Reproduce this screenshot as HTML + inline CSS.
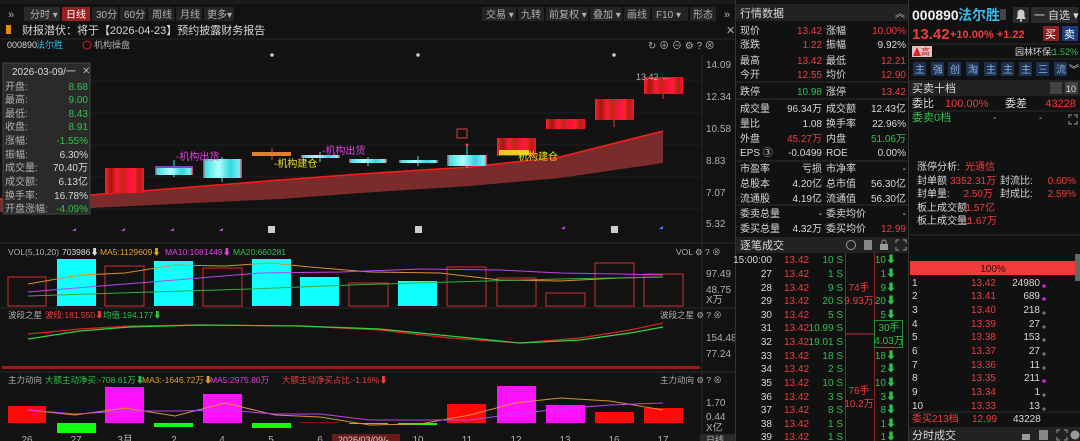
<!DOCTYPE html>
<html><head><meta charset="utf-8"><style>
html,body{margin:0;padding:0;background:#111112;width:1080px;height:441px;overflow:hidden}
svg{display:block}
text{font-family:"Liberation Sans","Noto Sans CJK SC",sans-serif;font-size:10px}
.w{fill:#d8d8d8}.g{fill:#b0b0b0}.r{fill:#f03c3c}.gr{fill:#2fc24a}.c{fill:#2cc6e8}.m{fill:#e040e0}.o{fill:#e0a030}.y{fill:#e8e020}
.e{text-anchor:end}.mid{text-anchor:middle}
.lg{font-size:8.5px}
</style></head><body>
<svg width="1080" height="441" viewBox="0 0 1080 441" xmlns="http://www.w3.org/2000/svg">
<defs>
<linearGradient id="rc" x1="0" x2="1"><stop offset="0" stop-color="#ff2030"/><stop offset=".15" stop-color="#a01808"/><stop offset=".3" stop-color="#ff1838"/><stop offset=".45" stop-color="#c02810"/><stop offset=".6" stop-color="#ff1040"/><stop offset=".75" stop-color="#ff2030"/><stop offset=".88" stop-color="#b02010"/><stop offset="1" stop-color="#ff1030"/></linearGradient>
<linearGradient id="cc" x1="0" x2="1"><stop offset="0" stop-color="#e02040"/><stop offset=".06" stop-color="#40e0e0"/><stop offset=".4" stop-color="#b0ffff"/><stop offset=".7" stop-color="#30d8e0"/><stop offset=".93" stop-color="#80f0f0"/><stop offset="1" stop-color="#e02040"/></linearGradient>
</defs>
<rect x="0" y="0" width="735" height="441" fill="#121213"/>
<rect x="0" y="0" width="735" height="4" fill="#1a1a1a"/>
<text x="8" y="18" class="g" style="font-size:11px">»</text>
<rect x="24" y="7" width="36" height="14" fill="#2a2a2a"/><text x="30" y="18" class="g">分时 ▾</text>
<rect x="62" y="7" width="28" height="14" fill="#9a2020"/><text x="66" y="18" fill="#fff">日线</text>
<rect x="92" y="7" width="26" height="14" fill="#242424"/><text x="96" y="18" class="g">30分</text>
<rect x="120" y="7" width="26" height="14" fill="#242424"/><text x="124" y="18" class="g">60分</text>
<rect x="148" y="7" width="26" height="14" fill="#242424"/><text x="152" y="18" class="g">周线</text>
<rect x="176" y="7" width="26" height="14" fill="#242424"/><text x="180" y="18" class="g">月线</text>
<rect x="204" y="7" width="30" height="14" fill="#242424"/><text x="207" y="18" class="g">更多▾</text>
<rect x="482" y="7" width="34" height="14" fill="#242424"/><text x="486" y="18" class="g">交易 ▾</text>
<rect x="518" y="7" width="26" height="14" fill="#242424"/><text x="521" y="18" class="g">九转</text>
<rect x="546" y="7" width="42" height="14" fill="#242424"/><text x="549" y="18" class="g">前复权 ▾</text>
<rect x="590" y="7" width="32" height="14" fill="#242424"/><text x="593" y="18" class="g">叠加 ▾</text>
<rect x="624" y="7" width="26" height="14" fill="#242424"/><text x="627" y="18" class="g">画线</text>
<rect x="652" y="7" width="36" height="14" fill="#242424"/><text x="656" y="18" class="g">F10 ▾</text>
<rect x="690" y="7" width="26" height="14" fill="#242424"/><text x="693" y="18" class="g">形态</text>
<text x="724" y="18" class="g" style="font-size:11px">»</text>
<rect x="6" y="25" width="5" height="9" fill="#e08a10"/>
<text x="22" y="34" class="w" style="font-size:11px">财报潜伏：将于【2026-04-23】预约披露财务报告</text>
<text x="726" y="34" class="g" style="font-size:11px">✕</text>
<line x1="0" y1="39" x2="735" y2="39" stroke="#262626"/>
<text x="7" y="48" class="w" style="font-size:9px">000890</text><text x="36" y="48" class="c" style="font-size:9px">法尔胜</text>
<circle cx="87" cy="45" r="4" fill="none" stroke="#d02020"/><text x="94" y="48" class="g" style="font-size:9px">机构操盘</text>
<text x="648" y="49" class="g" style="font-size:10px">↻ ⊕ ⊖ ⚙ ? ⊗</text>
<circle cx="272" cy="55" r="1.8" fill="#ccc"/><circle cx="418" cy="55" r="1.8" fill="#ccc"/><circle cx="614" cy="55" r="1.8" fill="#ccc"/>
<line x1="0" y1="81" x2="700" y2="81" stroke="#1e1e1e"/><line x1="0" y1="113" x2="700" y2="113" stroke="#1e1e1e"/><line x1="0" y1="145" x2="700" y2="145" stroke="#1e1e1e"/><line x1="0" y1="177" x2="700" y2="177" stroke="#1e1e1e"/><line x1="0" y1="209" x2="700" y2="209" stroke="#1e1e1e"/>
<line x1="702" y1="55" x2="702" y2="441" stroke="#2a2a2a"/>
<g class="g" style="font-size:9px"><text x="706" y="68">14.09</text><text x="706" y="100">12.34</text><text x="706" y="132">10.58</text><text x="706" y="164">8.83</text><text x="706" y="196">7.07</text><text x="706" y="227">5.32</text></g>
<polygon points="0,199 90,195 280,180 360,174 470,167 560,157 663,131 663,163 560,178 470,186 360,193 280,199 90,208 0,212" fill="#7a2c2c"/>
<polyline points="0,199 90,195 280,180 360,174 470,167 560,157 663,131" fill="none" stroke="#ff1a1a" stroke-width="1.5"/>
<rect x="105" y="168" width="39" height="25" fill="url(#rc)"/>
<line x1="174" y1="160" x2="174" y2="177" stroke="#40e0e0"/><rect x="155" y="166" width="38" height="9" fill="url(#cc)"/><rect x="155" y="166" width="38" height="2" fill="#8040e0"/>
<line x1="222" y1="157" x2="222" y2="182" stroke="#40e0e0"/><rect x="203" y="159" width="39" height="19" fill="url(#cc)"/>
<line x1="272" y1="148" x2="272" y2="160" stroke="#e04040"/><rect x="252" y="152" width="39" height="4" fill="#e08030"/>
<line x1="320" y1="152" x2="320" y2="162" stroke="#40e0e0"/><rect x="301" y="155" width="39" height="3" fill="url(#cc)"/>
<line x1="368" y1="157" x2="368" y2="166" stroke="#40e0e0"/><rect x="349" y="159" width="38" height="4" fill="url(#cc)"/>
<line x1="418" y1="156" x2="418" y2="166" stroke="#40e0e0"/><rect x="399" y="160" width="39" height="3" fill="url(#cc)"/>
<line x1="467" y1="146" x2="467" y2="168" stroke="#40e0e0"/><rect x="447" y="155" width="40" height="11" fill="url(#cc)"/>
<rect x="457" y="129" width="10" height="9" fill="none" stroke="#d04040"/><circle cx="467" cy="145" r="1.5" fill="#f04040"/>
<rect x="497" y="138" width="39" height="18" fill="url(#rc)"/><rect x="499" y="150" width="30" height="5" fill="#e8d020"/>
<rect x="546" y="119" width="39" height="10" fill="url(#rc)"/>
<line x1="614" y1="118" x2="614" y2="127" stroke="#f03030"/><rect x="595" y="99" width="39" height="21" fill="url(#rc)"/>
<line x1="663" y1="92" x2="663" y2="99" stroke="#f03030"/><rect x="644" y="77" width="39" height="17" fill="url(#rc)"/>
<text x="636" y="80" class="g" style="font-size:9px">13.42 ←</text>
<g style="font-size:9px"><text x="176" y="160" class="m">-机构出货</text><text x="274" y="167" class="y">-机构建仓</text><text x="322" y="154" class="m">-机构出货</text><text x="518" y="160" class="y">机构建仓</text></g>
<g fill="#c040e0"><polygon points="76,228 72,231 76,231"/><polygon points="125,228 121,231 125,231"/><polygon points="174,228 170,231 174,231"/><polygon points="223,228 219,231 223,231"/><polygon points="565,226 561,229 565,229"/></g>
<g fill="#4080f0"><polygon points="614,226 610,229 614,229"/><polygon points="663,226 659,229 663,229"/></g>
<rect x="268" y="226" width="7" height="7" fill="#ccc"/><rect x="415" y="226" width="7" height="7" fill="#ccc"/><rect x="611" y="226" width="7" height="7" fill="#ccc"/>
<rect x="3" y="63" width="87" height="151" fill="#2a2a2b" stroke="#444"/>
<text x="12" y="75" class="w">2026-03-09/一</text><text x="82" y="74" class="g">✕</text>
<g class="g"><text x="5" y="90">开盘:</text><text x="5" y="103">最高:</text><text x="5" y="117">最低:</text><text x="5" y="130">收盘:</text><text x="5" y="144">涨幅:</text><text x="5" y="158">振幅:</text><text x="5" y="171">成交量:</text><text x="5" y="185">成交额:</text><text x="5" y="199">换手率:</text><text x="5" y="212">开盘涨幅:</text></g>
<g class="e"><text x="88" y="90" class="gr">8.68</text><text x="88" y="103" class="gr">9.00</text><text x="88" y="117" class="gr">8.43</text><text x="88" y="130" class="gr">8.91</text><text x="88" y="144" class="gr">-1.55%</text><text x="88" y="158" class="w">6.30%</text><text x="88" y="171" class="w">70.40万</text><text x="88" y="185" class="w">6.13亿</text><text x="88" y="199" class="w">16.78%</text><text x="88" y="212" class="gr">-4.09%</text></g>
<line x1="0" y1="243" x2="735" y2="243" stroke="#2a2a2a"/>
<text x="8" y="255" class="g lg">VOL(5,10,20)</text><text x="62" y="255" class="w lg">703986⬇</text><text x="100" y="255" class="o lg">MA5:1129609⬇</text><text x="165" y="255" class="m lg">MA10:1081449⬇</text><text x="233" y="255" class="gr lg">MA20:660281</text>
<text x="676" y="255" class="g lg">VOL ⚙ ? ⊗</text>
<g fill="none" stroke="#d03030"><rect x="8" y="277" width="38" height="29"/><rect x="105" y="266" width="39" height="40"/><rect x="203" y="268" width="39" height="38"/><rect x="349" y="283" width="39" height="23"/><rect x="447" y="267" width="39" height="39"/><rect x="497" y="278" width="39" height="28"/><rect x="546" y="293" width="39" height="13"/><rect x="595" y="263" width="39" height="43"/><rect x="644" y="274" width="39" height="32"/></g>
<g fill="#10ffff"><rect x="57" y="259" width="39" height="47"/><rect x="154" y="261" width="39" height="45"/><rect x="252" y="259" width="39" height="47"/><rect x="300" y="277" width="39" height="29"/><rect x="398" y="281" width="39" height="25"/></g>
<polyline points="28,284 80,275 125,273 175,265 225,266 270,263 310,267 370,272 440,273 500,280 560,281 620,278 663,277" fill="none" stroke="#d89030"/>
<polyline points="28,292 100,286 175,280 260,273 340,272 420,269 500,270 560,273 620,274 663,275" fill="none" stroke="#c040f0"/>
<polyline points="28,296 120,293 250,289 350,285 450,282 560,279 663,277" fill="none" stroke="#30b040"/>
<g class="g" style="font-size:9px"><text x="706" y="277">97.49</text><text x="706" y="293">48.75</text><text x="706" y="303">X万</text></g>
<line x1="0" y1="308" x2="735" y2="308" stroke="#2a2a2a"/>
<text x="8" y="318" class="g lg">波段之星</text><text x="45" y="318" class="r lg">波段:181.550⬇</text><text x="103" y="318" class="gr lg">均值:194.177⬇</text>
<text x="660" y="318" class="g lg">波段之星 ⚙ ? ⊗</text>
<polyline points="28,334 80,329 130,326 200,325 300,326 380,330 450,338 520,343 580,338 630,330 663,323" fill="none" stroke="#e02020" stroke-width="1.2"/>
<polyline points="28,339 80,331 130,327 200,325 300,326 380,329 450,336 520,343 580,340 630,333 663,327" fill="none" stroke="#30d040" stroke-width="1.2"/>
<g class="g" style="font-size:9px"><text x="706" y="341">154.48</text><text x="706" y="357">77.24</text></g>
<rect x="2" y="366" width="698" height="3" fill="#a01818"/>
<line x1="0" y1="372" x2="735" y2="372" stroke="#2a2a2a"/>
<text x="8" y="383" class="g lg">主力动向</text><text x="45" y="383" class="gr lg">大额主动净买:-708.61万⬇</text><text x="142" y="383" class="o lg">MA3:-1646.72万⬇</text><text x="210" y="383" class="m lg">MA5:2975.80万</text><text x="282" y="383" class="r lg">大额主动净买占比:-1.16%⬇</text>
<text x="660" y="383" class="g lg">主力动向 ⚙ ? ⊗</text>
<g fill="#ff0a0a"><rect x="8" y="406" width="38" height="17"/><rect x="447" y="404" width="39" height="19"/><rect x="595" y="412" width="39" height="11"/><rect x="644" y="408" width="39" height="15"/></g>
<g fill="#ff10ff"><rect x="105" y="387" width="39" height="36"/><rect x="203" y="394" width="39" height="29"/><rect x="497" y="386" width="39" height="37"/><rect x="546" y="405" width="39" height="18"/></g>
<g fill="#10ff10"><rect x="57" y="423" width="39" height="10"/><rect x="154" y="423" width="39" height="4"/><rect x="252" y="423" width="39" height="5"/><rect x="349" y="423" width="39" height="1"/><rect x="398" y="423" width="39" height="2"/></g>
<rect x="300" y="422" width="39" height="1" fill="#801010"/>
<polyline points="28,410 75,415 125,408 175,416 225,403 275,415 320,417 370,425 420,424 470,415 515,403 560,398 610,401 663,410" fill="none" stroke="#d89030"/>
<polyline points="28,410 75,414 125,411 175,411 225,410 275,414 320,414 370,420 420,420 470,420 515,414 560,409 610,405 663,403" fill="none" stroke="#c040f0"/>
<g class="g" style="font-size:9px"><text x="706" y="406">1.70</text><text x="706" y="420">0.44</text><text x="706" y="431">X亿</text></g>
<g class="g mid" style="font-size:9px"><text x="27" y="443">26</text><text x="76" y="443">27</text><text x="125" y="443">3月</text><text x="174" y="443">2</text><text x="222" y="443">4</text><text x="271" y="443">5</text><text x="320" y="443">6</text><text x="418" y="443">10</text><text x="467" y="443">11</text><text x="516" y="443">12</text><text x="565" y="443">13</text><text x="614" y="443">16</text><text x="663" y="443">17</text></g>
<rect x="332" y="434" width="68" height="7" fill="#6a1a1a"/><text x="338" y="443" class="w" style="font-size:9px">2026/03/09/-</text>
<rect x="700" y="434" width="35" height="7" fill="#2a2a2a"/><text x="706" y="443" class="g" style="font-size:9px">日线</text>

<rect x="735" y="0" width="173" height="441" fill="#111112"/>
<line x1="735.5" y1="0" x2="735.5" y2="441" stroke="#333"/>
<rect x="736" y="4" width="172" height="17" fill="#222"/>
<text x="740" y="17" class="w" style="font-size:11px">行情数据</text><text x="895" y="17" class="g">︽</text>
<g style="font-size:11px">
<g class="w"><text x="740" y="34">现价</text><text x="740" y="48">涨跌</text><text x="740" y="64">最高</text><text x="740" y="78">今开</text><text x="740" y="95">跌停</text><text x="740" y="112">成交量</text><text x="740" y="127">量比</text><text x="740" y="142">外盘</text><text x="740" y="156">EPS ③</text><text x="740" y="172">市盈率</text><text x="740" y="187">总股本</text><text x="740" y="202">流通股</text><text x="740" y="217">委卖总量</text><text x="740" y="232">委买总量</text>
<text x="826" y="34">涨幅</text><text x="826" y="48">振幅</text><text x="826" y="64">最低</text><text x="826" y="78">均价</text><text x="826" y="95">涨停</text><text x="826" y="112">成交额</text><text x="826" y="127">换手率</text><text x="826" y="142">内盘</text><text x="826" y="156">ROE</text><text x="826" y="172">市净率</text><text x="826" y="187">总市值</text><text x="826" y="202">流通值</text><text x="826" y="217">委卖均价</text><text x="826" y="232">委买均价</text></g>
<g class="e"><text x="822" y="34" class="r">13.42</text><text x="822" y="48" class="r">1.22</text><text x="822" y="64" class="r">13.42</text><text x="822" y="78" class="r">12.55</text><text x="822" y="95" class="gr">10.98</text><text x="822" y="112" class="w">96.34万</text><text x="822" y="127" class="w">1.08</text><text x="822" y="142" class="r">45.27万</text><text x="822" y="156" class="w">-0.0499</text><text x="822" y="172" class="w">亏损</text><text x="822" y="187" class="w">4.20亿</text><text x="822" y="202" class="w">4.19亿</text><text x="822" y="217" class="w">-</text><text x="822" y="232" class="w">4.32万</text>
<text x="906" y="34" class="r">10.00%</text><text x="906" y="48" class="w">9.92%</text><text x="906" y="64" class="r">12.21</text><text x="906" y="78" class="r">12.90</text><text x="906" y="95" class="r">13.42</text><text x="906" y="112" class="w">12.43亿</text><text x="906" y="127" class="w">22.96%</text><text x="906" y="142" class="gr">51.06万</text><text x="906" y="156" class="w">0.00%</text><text x="906" y="172" class="w">-</text><text x="906" y="187" class="w">56.30亿</text><text x="906" y="202" class="w">56.30亿</text><text x="906" y="217" class="w">-</text><text x="906" y="232" class="r">12.99</text></g>
</g>
<g stroke="#2e2e2e"><line x1="736" y1="82" x2="908" y2="82"/><line x1="736" y1="99" x2="908" y2="99"/><line x1="736" y1="161" x2="908" y2="161"/><line x1="736" y1="205" x2="908" y2="205"/></g>
<rect x="736" y="237" width="172" height="16" fill="#222"/>
<text x="740" y="249" class="w" style="font-size:11px">逐笔成交</text>
<circle cx="851" cy="245" r="4.5" fill="none" stroke="#999"/><rect x="864" y="240" width="8" height="10" fill="#888"/><rect x="880" y="244" width="8" height="6" fill="#999"/><path d="M882 244v-2a2 2 0 0 1 4 0v2" fill="none" stroke="#999"/><path d="M896 243v-3h3M903 240h3v3M906 247v3h-3M899 250h-3v-3" fill="none" stroke="#999"/>
<line x1="845.5" y1="253" x2="845.5" y2="441" stroke="#8a2020"/><line x1="874.5" y1="253" x2="874.5" y2="441" stroke="#8a2020"/>
<line x1="845" y1="334" x2="874" y2="334" stroke="#c03030"/>
<rect x="874.5" y="320.5" width="28" height="27" fill="none" stroke="#209030"/>
<g class="r mid" style="font-size:10px"><text x="859" y="291">74手</text><text x="859" y="304">9.93万</text><text x="859" y="394">76手</text><text x="859" y="407">10.2万</text></g>
<g class="gr mid" style="font-size:10px"><text x="889" y="331">30手</text><text x="889" y="344">4.03万</text></g>
<g style="font-size:10px">
<g class="w e"><text x="772" y="263">15:00:00</text><text x="772" y="277">27</text><text x="772" y="291">28</text><text x="772" y="304">29</text><text x="772" y="318">30</text><text x="772" y="331">31</text><text x="772" y="345">32</text><text x="772" y="359">33</text><text x="772" y="372">34</text><text x="772" y="386">35</text><text x="772" y="400">36</text><text x="772" y="413">37</text><text x="772" y="427">38</text><text x="772" y="440">39</text></g>
<g class="r"><text x="784" y="263">13.42</text><text x="784" y="277">13.42</text><text x="784" y="291">13.42</text><text x="784" y="304">13.42</text><text x="784" y="318">13.42</text><text x="784" y="331">13.42</text><text x="784" y="345">13.42</text><text x="784" y="359">13.42</text><text x="784" y="372">13.42</text><text x="784" y="386">13.42</text><text x="784" y="400">13.42</text><text x="784" y="413">13.42</text><text x="784" y="427">13.42</text><text x="784" y="440">13.42</text></g>
<g class="gr e"><text x="843" y="263">10 S</text><text x="843" y="277">1 S</text><text x="843" y="291">9 S</text><text x="843" y="304">20 S</text><text x="843" y="318">5 S</text><text x="843" y="331">10.99 S</text><text x="843" y="345">19.01 S</text><text x="843" y="359">18 S</text><text x="843" y="372">2 S</text><text x="843" y="386">10 S</text><text x="843" y="400">3 S</text><text x="843" y="413">8 S</text><text x="843" y="427">1 S</text><text x="843" y="440">1 S</text>
<text x="896" y="263">10⬇</text><text x="896" y="277">1⬇</text><text x="896" y="291">9⬇</text><text x="896" y="304">20⬇</text><text x="896" y="318">5⬇</text><text x="896" y="359">18⬇</text><text x="896" y="372">2⬇</text><text x="896" y="386">10⬇</text><text x="896" y="400">3⬇</text><text x="896" y="413">8⬇</text><text x="896" y="427">1⬇</text><text x="896" y="440">1⬇</text></g>
</g>

<rect x="908" y="0" width="172" height="441" fill="#111112"/>
<line x1="908.5" y1="0" x2="908.5" y2="441" stroke="#333"/>
<text x="912" y="20" fill="#f0f0f0" style="font-size:14px;font-weight:bold">000890</text><text x="958" y="20" fill="#38b8e8" style="font-size:14px;font-weight:bold">法尔胜</text>
<rect x="1000" y="9" width="6" height="11" fill="#444"/>
<rect x="1013" y="7" width="16" height="16" fill="#2a2a2a"/><path d="M1016 19h10l-1.5-2v-4a3.5 3.5 0 0 0-7 0v4z" fill="#ccc"/><circle cx="1021" cy="20.5" r="1.2" fill="#ccc"/>
<rect x="1031" y="7" width="47" height="16" fill="#2a2a2a"/><text x="1034" y="19" class="w" style="font-size:11px">一 自选 ▾</text>
<text x="912" y="39" class="r" style="font-size:15px;font-weight:bold">13.42</text><text x="950" y="38" class="r" style="font-size:11px;font-weight:bold">+10.00%  +1.22</text>
<rect x="1043" y="26" width="16" height="15" fill="#8a2020"/><text x="1045" y="38" fill="#fff" style="font-size:11px">买</text>
<rect x="1062" y="26" width="16" height="15" fill="#1d3a80"/><text x="1064" y="38" fill="#fff" style="font-size:11px">卖</text>
<line x1="908" y1="44" x2="1080" y2="44" stroke="#2a2a2a"/>
<rect x="912" y="46" width="20" height="11" fill="#e8c0c0"/><polygon points="913,56 917,47 921,56" fill="#e02020"/><text x="921" y="55" fill="#c02020" style="font-size:9px">高</text>
<text x="1015" y="55" class="w" style="font-size:9px">园林环保:</text><text x="1078" y="55" class="gr e" style="font-size:9px">-1.52%</text>
<line x1="908" y1="59" x2="1080" y2="59" stroke="#2a2a2a"/>
<g fill="#1e3050"><rect x="913" y="62" width="13" height="14"/><rect x="931" y="62" width="13" height="14"/><rect x="948" y="62" width="13" height="14"/><rect x="966" y="62" width="13" height="14"/><rect x="984" y="62" width="13" height="14"/><rect x="1001" y="62" width="13" height="14"/><rect x="1019" y="62" width="13" height="14"/><rect x="1036" y="62" width="13" height="14"/><rect x="1054" y="62" width="13" height="14"/></g>
<g fill="#8fb0d8" style="font-size:9px"><text x="915" y="73">主</text><text x="933" y="73">强</text><text x="950" y="73">创</text><text x="968" y="73">淘</text><text x="986" y="73">主</text><text x="1003" y="73">主</text><text x="1021" y="73">主</text><text x="1038" y="73">三</text><text x="1056" y="73">流</text></g>
<text x="1069" y="73" class="w" style="font-size:10px">︾</text>
<rect x="909" y="80" width="171" height="16" fill="#222"/>
<text x="912" y="92" class="w" style="font-size:11px">买卖十档</text>
<rect x="1050" y="82" width="12" height="12" fill="#444"/><rect x="1065" y="82" width="13" height="12" fill="#444"/><text x="1066" y="92" class="w" style="font-size:9px">10</text>
<text x="912" y="107" class="w" style="font-size:11px">委比</text><text x="945" y="107" class="r" style="font-size:11px">100.00%</text><text x="1005" y="107" class="w" style="font-size:11px">委差</text><text x="1076" y="107" class="r e" style="font-size:11px">43228</text>
<line x1="908" y1="111" x2="1080" y2="111" stroke="#2a2a2a"/>
<text x="912" y="121" class="gr" style="font-size:11px">委卖0档</text><text x="993" y="121" class="g">-</text><text x="1039" y="121" class="g">-</text><path d="M1069 118v-3h3M1074 115h3v3M1077 121v3h-3M1072 124h-3v-3" fill="none" stroke="#999"/>
<g style="font-size:11px"><text x="917" y="170" class="w">涨停分析:</text><text x="965" y="170" class="r">光通信</text>
<text x="917" y="184" class="w">封单额</text><text x="950" y="184" class="r">3352.31万</text><text x="1000" y="184" class="w">封流比:</text><text x="1076" y="184" class="r e">0.60%</text>
<text x="917" y="197" class="w">封单量:</text><text x="993" y="197" class="r e">2.50万</text><text x="1000" y="197" class="w">封成比:</text><text x="1076" y="197" class="r e">2.59%</text>
<text x="917" y="211" class="w">板上成交额:</text><text x="995" y="211" class="r e">1.57亿</text>
<text x="917" y="224" class="w">板上成交量:</text><text x="997" y="224" class="r e">11.67万</text></g>
<line x1="908" y1="235" x2="1080" y2="235" stroke="#2a2a2a"/>
<rect x="910" y="261" width="165" height="14" fill="#f23a3a"/><text x="993" y="272" class="mid" fill="#2a0a0a" style="font-size:10px">100%</text>
<rect x="1075" y="254" width="5" height="27" fill="#666"/>
<g style="font-size:11px">
<g class="w"><text x="912" y="286">1</text><text x="912" y="299">2</text><text x="912" y="313">3</text><text x="912" y="327">4</text><text x="912" y="340">5</text><text x="912" y="354">6</text><text x="912" y="368">7</text><text x="912" y="381">8</text><text x="912" y="395">9</text><text x="912" y="409">10</text></g>
<g class="r e"><text x="996" y="286">13.42</text><text x="996" y="299">13.41</text><text x="996" y="313">13.40</text><text x="996" y="327">13.39</text><text x="996" y="340">13.38</text><text x="996" y="354">13.37</text><text x="996" y="368">13.36</text><text x="996" y="381">13.35</text><text x="996" y="395">13.34</text><text x="996" y="409">13.33</text></g>
<g class="w e"><text x="1040" y="286">24980</text><text x="1040" y="299">689</text><text x="1040" y="313">218</text><text x="1040" y="327">27</text><text x="1040" y="340">153</text><text x="1040" y="354">27</text><text x="1040" y="368">11</text><text x="1040" y="381">211</text><text x="1040" y="395">1</text><text x="1040" y="409">13</text></g>
</g>
<g fill="#777"><circle cx="1044" cy="313" r="1.6"/><circle cx="1044" cy="327" r="1.6"/><circle cx="1044" cy="340" r="1.6"/><circle cx="1044" cy="354" r="1.6"/><circle cx="1044" cy="368" r="1.6"/><circle cx="1044" cy="395" r="1.6"/><circle cx="1044" cy="409" r="1.6"/></g>
<g fill="#e020e0"><circle cx="1044" cy="286" r="1.8"/><circle cx="1044" cy="299" r="1.8"/><circle cx="1044" cy="381" r="1.8"/></g>
<line x1="908" y1="412" x2="1080" y2="412" stroke="#2a2a2a"/>
<g style="font-size:11px"><text x="912" y="422" class="r">委买213档</text><text x="972" y="422" class="r">12.99</text><text x="1013" y="422" class="w">43228</text></g>
<rect x="909" y="427" width="171" height="14" fill="#222"/>
<text x="912" y="439" class="w" style="font-size:11px">分时成交</text>
<rect x="1022" y="434" width="8" height="6" fill="#999"/><rect x="1039" y="430" width="9" height="10" fill="#888"/><path d="M1057 433v-3h3M1064 430h3v3M1067 437v3h-3M1060 440h-3v-3" fill="none" stroke="#999"/><circle cx="1075" cy="435" r="4.5" fill="#999"/>
</svg>
</body></html>
